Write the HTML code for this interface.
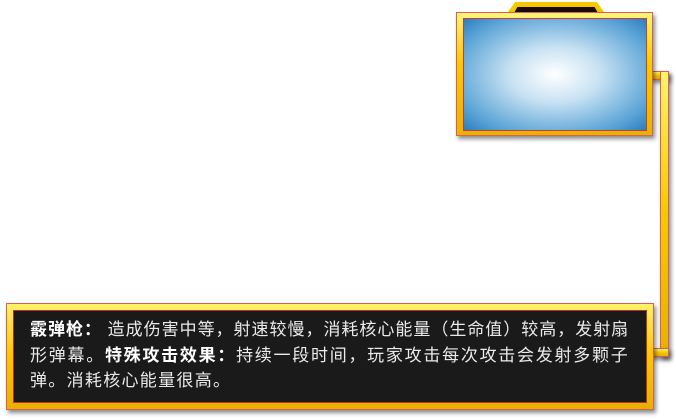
<!DOCTYPE html><html><head><meta charset="utf-8"><style>
body{margin:0;width:676px;height:420px;background:#fff;position:relative;overflow:hidden;font-family:"Liberation Sans","Noto Sans CJK SC",sans-serif}
.g{position:absolute;background:linear-gradient(#fff36a,#f7c800 50%,#e8b000);border:1px solid #d9605a;box-sizing:border-box}
.sh{box-shadow:2px 3px 4px rgba(0,0,0,.45)}
.j{width:599px;text-align:justify;text-align-last:justify;white-space:nowrap}
</style></head><body>
<div class="g sh" style="left:650px;top:71px;width:19px;height:9px"></div>
<div class="g sh" style="left:660px;top:71px;width:9px;height:286px"></div>
<div class="g sh" style="left:650px;top:348px;width:19px;height:9px"></div>
<div style="position:absolute;left:505px;top:2px;width:102px;height:14px;background:#f5c800;clip-path:polygon(10% 0,90% 0,100% 100%,0 100%);"></div>
<div style="position:absolute;left:514px;top:7px;width:84px;height:6px;background:#1a0a00;clip-path:polygon(4% 0,96% 0,100% 100%,0 100%)"></div>
<div class="g sh" style="left:456px;top:12px;width:197px;height:124px;background:linear-gradient(#fff47a,#f8cc00 40%,#e9b200)"></div>
<div style="position:absolute;left:463px;top:18px;width:184px;height:113px;background:radial-gradient(ellipse at 50% 50%,#fff 0%,#c8e2f3 35%,#5aa3d6 80%,#2e7dbd 100%);border:1px solid #c04040;box-sizing:border-box"></div>
<div class="g sh" style="left:6px;top:303px;width:648px;height:107px"></div>
<div style="position:absolute;left:13px;top:310px;width:634px;height:93px;background:#1a1a1a;border:1px solid #c03030;box-sizing:border-box"></div>
<div style="position:absolute;left:30px;top:317px;font-size:17px;line-height:25.5px;color:#eaeaea;letter-spacing:0.8px">
<div class="j"><b style="color:#fff">霰弹枪：</b> 造成伤害中等，射速较慢，消耗核心能量（生命值）较高，发射扇</div>
<div class="j" style="letter-spacing:1.3px">形弹幕。<b style="color:#fff">特殊攻击效果：</b>持续一段时间，玩家攻击每次攻击会发射多颗子</div>
<div style="letter-spacing:1.3px">弹。消耗核心能量很高。</div>
</div>
</body></html>
